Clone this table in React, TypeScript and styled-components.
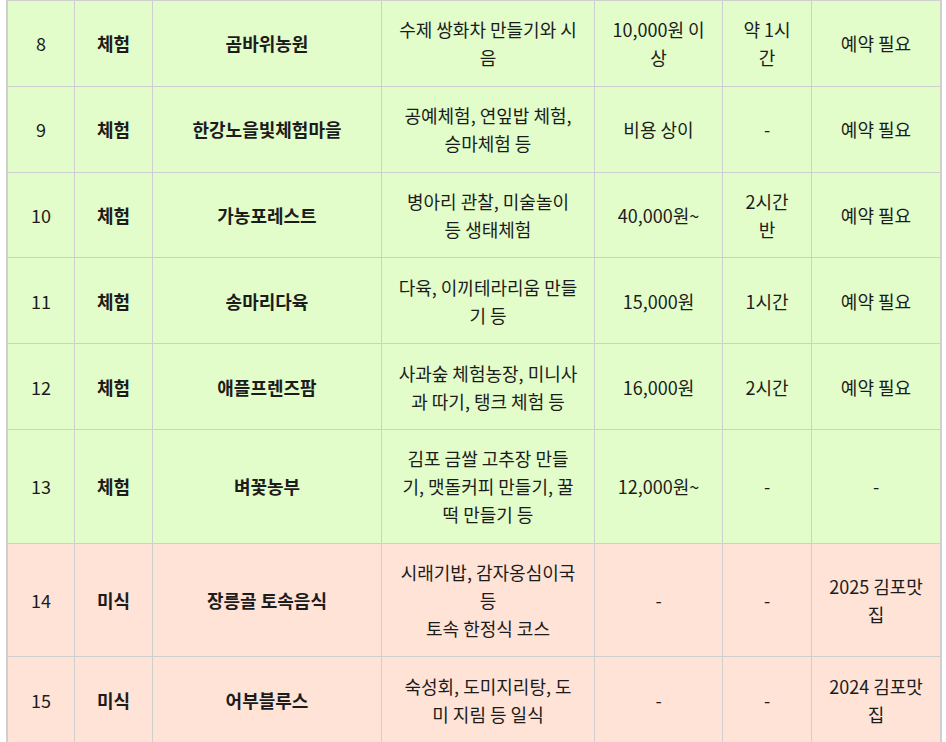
import React from 'react';
import styled, { createGlobalStyle } from 'styled-components';

const GlobalStyle = createGlobalStyle`
  html, body {
    margin: 0;
    padding: 0;
    background: #ffffff;
  }

  body {
    font-family: 'Noto Sans CJK KR', 'Noto Sans', sans-serif;
    color: #1c1c1c;
  }
`;

const Page = styled.div`
  padding: 0 5px 0 6px;
`;

const Table = styled.table`
  width: 936px;
  table-layout: fixed;
  border-collapse: separate;
  border-spacing: 0;
  border-left: 2px solid #cfcfcf;
  border-right: 2px solid #cfcfcf;
  border-top: 1px solid #cfcfcf;
  box-sizing: border-box;
`;

const Col = styled.col<{ $w: number }>`
  width: ${({ $w }) => $w}px;
`;

const Row = styled.tr<{ $kind: 'green' | 'pink' }>`
  background: ${({ $kind }) => ($kind === 'green' ? '#e2fcca' : '#fee3d6')};
`;

const Cell = styled.td<{ $bold?: boolean }>`
  padding: 14.4px 2px;
  border-right: 1px solid #cfcfcf;
  border-bottom: 1px solid #cfcfcf;
  text-align: center;
  vertical-align: middle;
  font-size: 18px;
  line-height: 28px;
  font-weight: ${({ $bold }) => ($bold ? 700 : 400)};
  white-space: pre;
  overflow: hidden;

  &:last-child {
    border-right: none;
  }
`;

type Item = {
  no: number;
  kind: string;
  name: string;
  desc: string;
  price: string;
  time: string;
  note: string;
  tone: 'green' | 'pink';
};

const items: Item[] = [
  { no: 8, kind: '체험', name: '곰바위농원', desc: '수제 쌍화차 만들기와 시\n음', price: '10,000원 이\n상', time: '약 1시\n간', note: '예약 필요', tone: 'green' },
  { no: 9, kind: '체험', name: '한강노을빛체험마을', desc: '공예체험, 연잎밥 체험,\n승마체험 등', price: '비용 상이', time: '-', note: '예약 필요', tone: 'green' },
  { no: 10, kind: '체험', name: '가농포레스트', desc: '병아리 관찰, 미술놀이\n등 생태체험', price: '40,000원~', time: '2시간\n반', note: '예약 필요', tone: 'green' },
  { no: 11, kind: '체험', name: '송마리다육', desc: '다육, 이끼테라리움 만들\n기 등', price: '15,000원', time: '1시간', note: '예약 필요', tone: 'green' },
  { no: 12, kind: '체험', name: '애플프렌즈팜', desc: '사과숲 체험농장, 미니사\n과 따기, 탱크 체험 등', price: '16,000원', time: '2시간', note: '예약 필요', tone: 'green' },
  { no: 13, kind: '체험', name: '벼꽃농부', desc: '김포 금쌀 고추장 만들\n기, 맷돌커피 만들기, 꿀\n떡 만들기 등', price: '12,000원~', time: '-', note: '-', tone: 'green' },
  { no: 14, kind: '미식', name: '장릉골 토속음식', desc: '시래기밥, 감자옹심이국\n등\n토속 한정식 코스', price: '-', time: '-', note: '2025 김포맛\n집', tone: 'pink' },
  { no: 15, kind: '미식', name: '어부블루스', desc: '숙성회, 도미지리탕, 도\n미 지림 등 일식', price: '-', time: '-', note: '2024 김포맛\n집', tone: 'pink' },
];

const widths = [67, 78, 229, 213, 128, 89, 128];

const App = () => {
  return (
    <>
      <GlobalStyle />
      <Page>
        <Table>
          <colgroup>
            {widths.map((w, idx) => (
              <Col key={idx} $w={w} />
            ))}
          </colgroup>
          <tbody>
            {items.map((item) => (
              <Row key={item.no} $kind={item.tone}>
                <Cell>{item.no}</Cell>
                <Cell $bold>{item.kind}</Cell>
                <Cell $bold>{item.name}</Cell>
                <Cell>{item.desc}</Cell>
                <Cell>{item.price}</Cell>
                <Cell>{item.time}</Cell>
                <Cell>{item.note}</Cell>
              </Row>
            ))}
          </tbody>
        </Table>
      </Page>
    </>
  );
};

export default App;
